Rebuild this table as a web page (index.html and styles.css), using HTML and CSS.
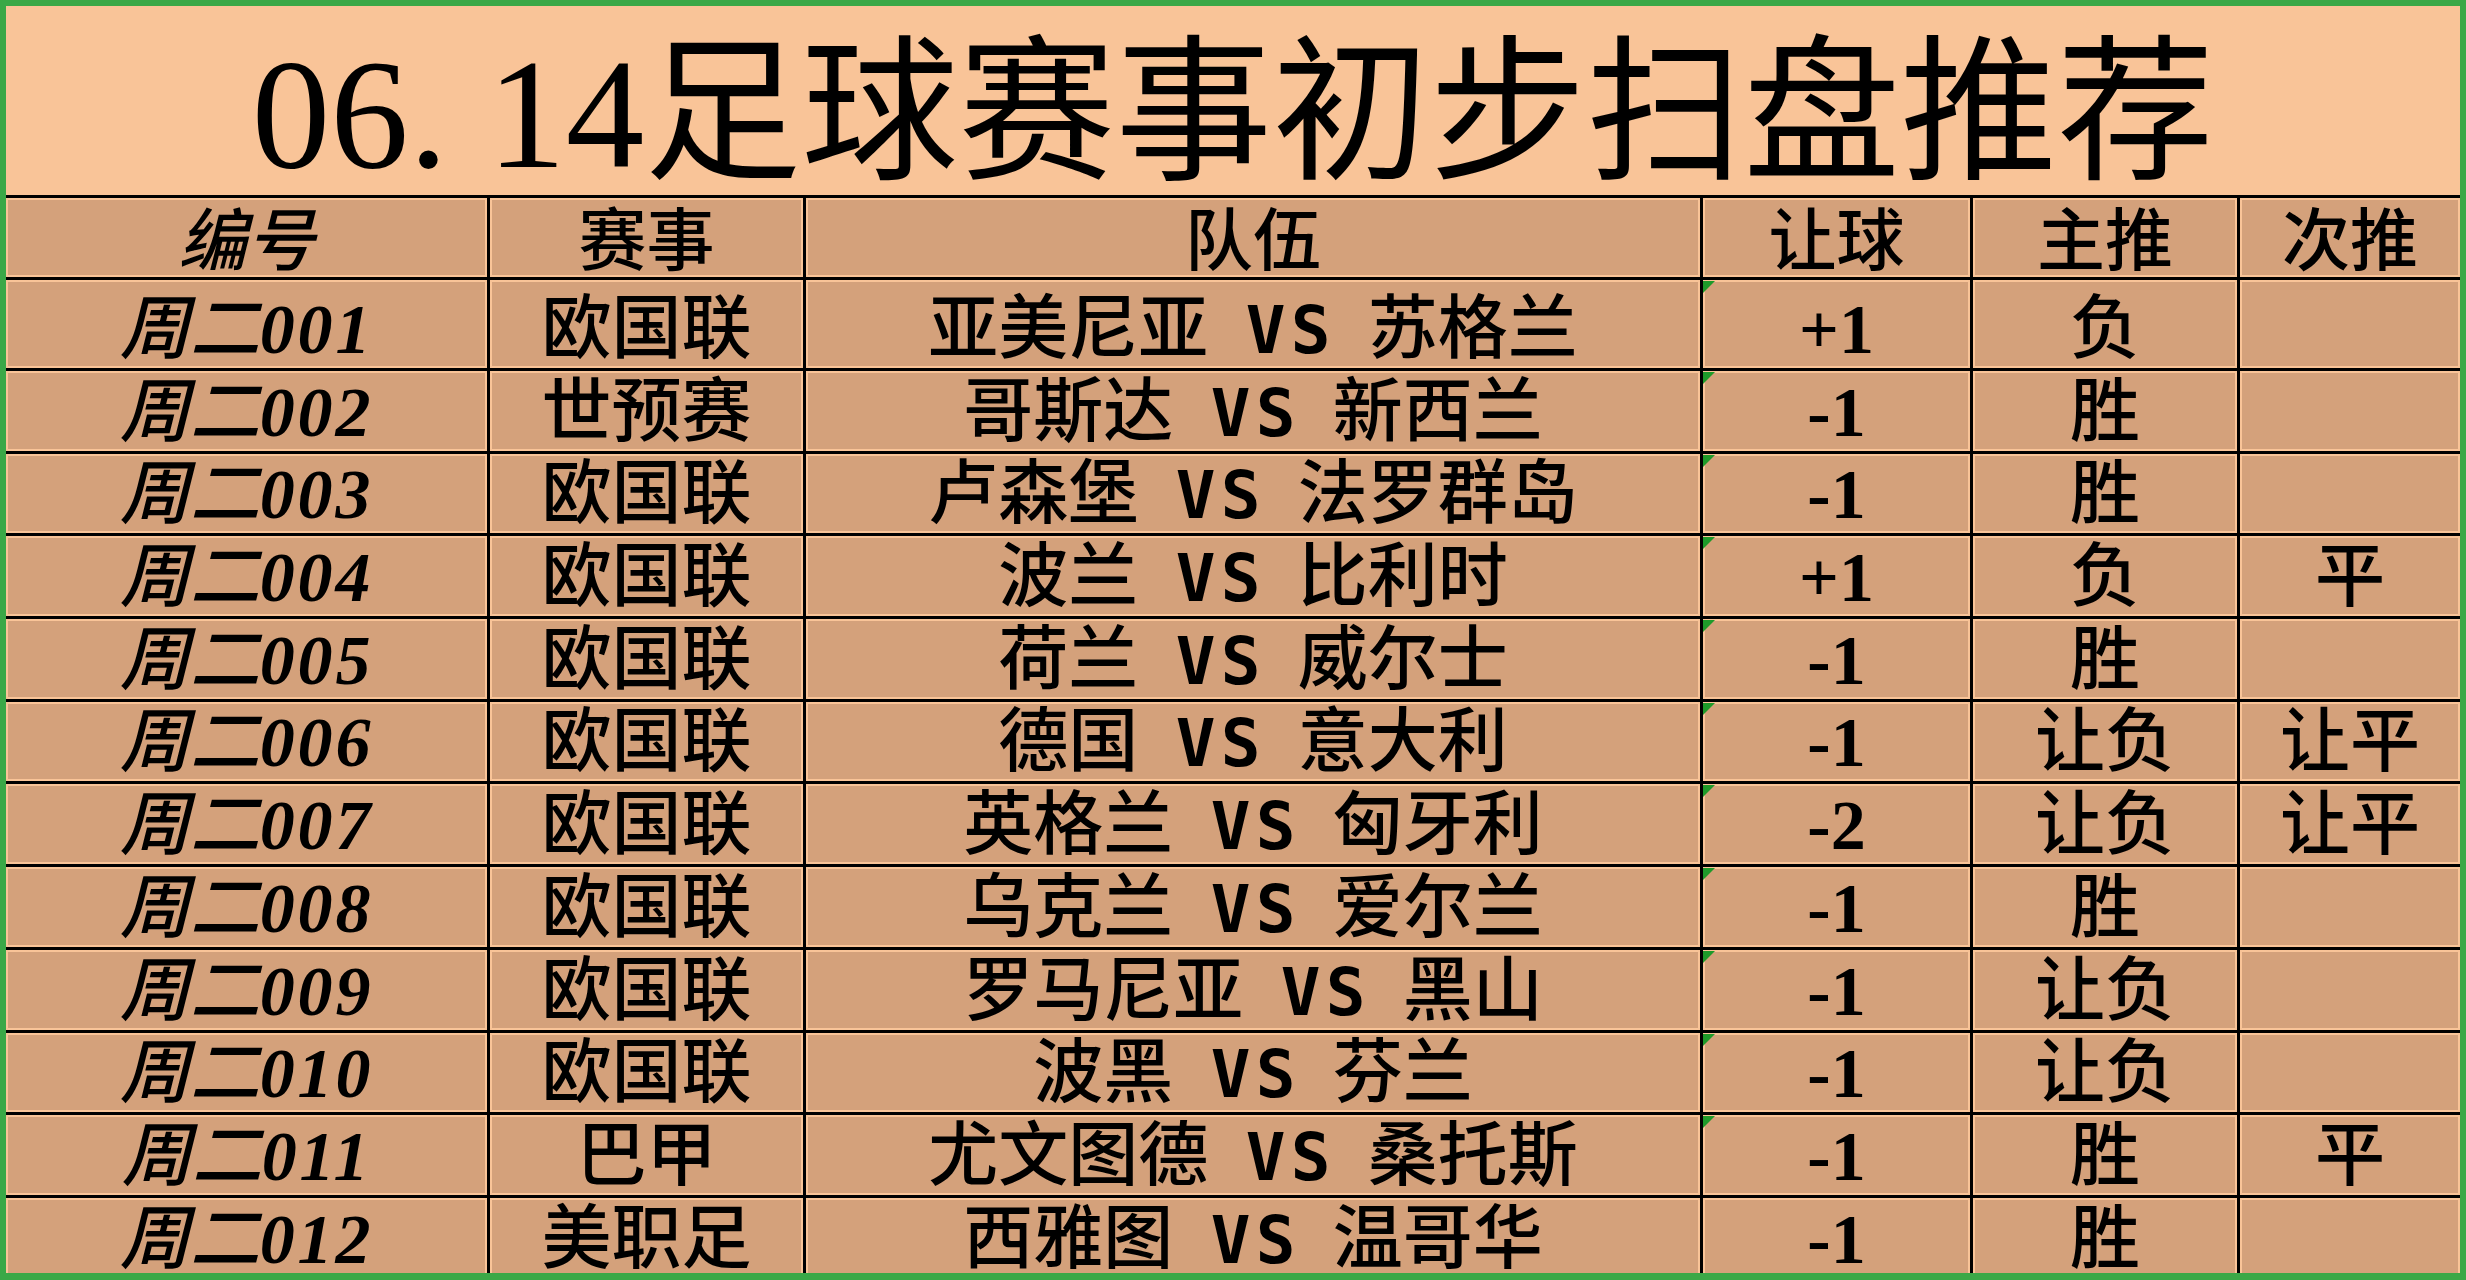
FILE: index.html
```html
<!DOCTYPE html>
<html lang="zh-CN">
<head>
<meta charset="utf-8">
<title>06.14足球赛事初步扫盘推荐</title>
<link rel="stylesheet" href="styles.css">
</head>
<body>
<div class="sheet">
  <div class="title"><span>06<span class="dot">.</span>14足球赛事初步扫盘推荐</span></div>
  <div class="grid">
    <div class="c h it"><span>编号</span></div><div class="c h"><span>赛事</span></div><div class="c h"><span>队伍</span></div><div class="c h"><span>让球</span></div><div class="c h"><span>主推</span></div><div class="c h"><span>次推</span></div>

    <div class="c it"><span>周二<span class="d">001</span></span></div><div class="c"><span>欧国联</span></div><div class="c"><span>亚美尼亚 <span class="vs">VS</span> 苏格兰</span></div><div class="c num tri"><span>+1</span></div><div class="c"><span>负</span></div><div class="c"></div>
    <div class="c it"><span>周二<span class="d">002</span></span></div><div class="c"><span>世预赛</span></div><div class="c"><span>哥斯达 <span class="vs">VS</span> 新西兰</span></div><div class="c num tri"><span>-1</span></div><div class="c"><span>胜</span></div><div class="c"></div>
    <div class="c it"><span>周二<span class="d">003</span></span></div><div class="c"><span>欧国联</span></div><div class="c"><span>卢森堡 <span class="vs">VS</span> 法罗群岛</span></div><div class="c num tri"><span>-1</span></div><div class="c"><span>胜</span></div><div class="c"></div>
    <div class="c it"><span>周二<span class="d">004</span></span></div><div class="c"><span>欧国联</span></div><div class="c"><span>波兰 <span class="vs">VS</span> 比利时</span></div><div class="c num tri"><span>+1</span></div><div class="c"><span>负</span></div><div class="c"><span>平</span></div>
    <div class="c it"><span>周二<span class="d">005</span></span></div><div class="c"><span>欧国联</span></div><div class="c"><span>荷兰 <span class="vs">VS</span> 威尔士</span></div><div class="c num tri"><span>-1</span></div><div class="c"><span>胜</span></div><div class="c"></div>
    <div class="c it"><span>周二<span class="d">006</span></span></div><div class="c"><span>欧国联</span></div><div class="c"><span>德国 <span class="vs">VS</span> 意大利</span></div><div class="c num tri"><span>-1</span></div><div class="c"><span>让负</span></div><div class="c"><span>让平</span></div>
    <div class="c it"><span>周二<span class="d">007</span></span></div><div class="c"><span>欧国联</span></div><div class="c"><span>英格兰 <span class="vs">VS</span> 匈牙利</span></div><div class="c num tri"><span>-2</span></div><div class="c"><span>让负</span></div><div class="c"><span>让平</span></div>
    <div class="c it"><span>周二<span class="d">008</span></span></div><div class="c"><span>欧国联</span></div><div class="c"><span>乌克兰 <span class="vs">VS</span> 爱尔兰</span></div><div class="c num tri"><span>-1</span></div><div class="c"><span>胜</span></div><div class="c"></div>
    <div class="c it"><span>周二<span class="d">009</span></span></div><div class="c"><span>欧国联</span></div><div class="c"><span>罗马尼亚 <span class="vs">VS</span> 黑山</span></div><div class="c num tri"><span>-1</span></div><div class="c"><span>让负</span></div><div class="c"></div>
    <div class="c it"><span>周二<span class="d">010</span></span></div><div class="c"><span>欧国联</span></div><div class="c"><span>波黑 <span class="vs">VS</span> 芬兰</span></div><div class="c num tri"><span>-1</span></div><div class="c"><span>让负</span></div><div class="c"></div>
    <div class="c it"><span>周二<span class="d">011</span></span></div><div class="c"><span>巴甲</span></div><div class="c"><span>尤文图德 <span class="vs">VS</span> 桑托斯</span></div><div class="c num tri"><span>-1</span></div><div class="c"><span>胜</span></div><div class="c"><span>平</span></div>
    <div class="c it"><span>周二<span class="d">012</span></span></div><div class="c"><span>美职足</span></div><div class="c"><span>西雅图 <span class="vs">VS</span> 温哥华</span></div><div class="c num"><span>-1</span></div><div class="c"><span>胜</span></div><div class="c"></div>
  </div>
</div>
</body>
</html>
```

FILE: styles.css
```css
html, body {
  margin: 0;
  padding: 0;
  background: #ffffff;
}

.sheet {
  width: 2466px;
  height: 1280px;
  box-sizing: border-box;
  border: 6px solid #3aa847;
  border-bottom-width: 7px;
  background: #f9c498;
  overflow: hidden;
  display: flex;
  flex-direction: column;
  font-family: "Liberation Serif", "Noto Sans CJK SC", serif;
  color: #000;
}

.title {
  flex: none;
  height: 189px;
  box-sizing: border-box;
  padding-top: 28px;
  display: flex;
  align-items: center;
  justify-content: center;
  font-size: 157px;
  line-height: 1;
  font-weight: 400;
  white-space: nowrap;
}

.title .dot {
  letter-spacing: 0.25em;
}

.grid {
  flex: none;
  display: grid;
  grid-template-columns: 481px 313px 894px 267px 264px 220px;
  grid-template-rows: 79px 88px repeat(10, 79.7px) 80px;
  gap: 3px;
  padding-top: 3px;
  background: #000;
}

.c {
  position: relative;
  background: #d4a17b;
  box-shadow: inset 0 0 0 2px #f9c498;
  display: flex;
  align-items: flex-end;
  justify-content: center;
  box-sizing: border-box;
  padding-bottom: 3px;
  font-size: 70px;
  line-height: 1;
  font-weight: 500;
  white-space: pre;
}

.c.h {
  font-size: 68px;
  padding-bottom: 1px;
}

.c.it {
  font-style: italic;
}

.c .d {
  font-weight: 700;
  letter-spacing: 0.04em;
}

.c.num {
  font-weight: 700;
}

.vs {
  font-family: "DejaVu Sans Mono", monospace;
  font-weight: 700;
  letter-spacing: 0.08em;
  font-size: 66px;
  margin: 0 0.22em 0 0.3em;
}

.tri::before {
  content: "";
  position: absolute;
  top: 1px;
  left: 0;
  border-top: 12px solid #1e9a2a;
  border-right: 12px solid transparent;
}
```
